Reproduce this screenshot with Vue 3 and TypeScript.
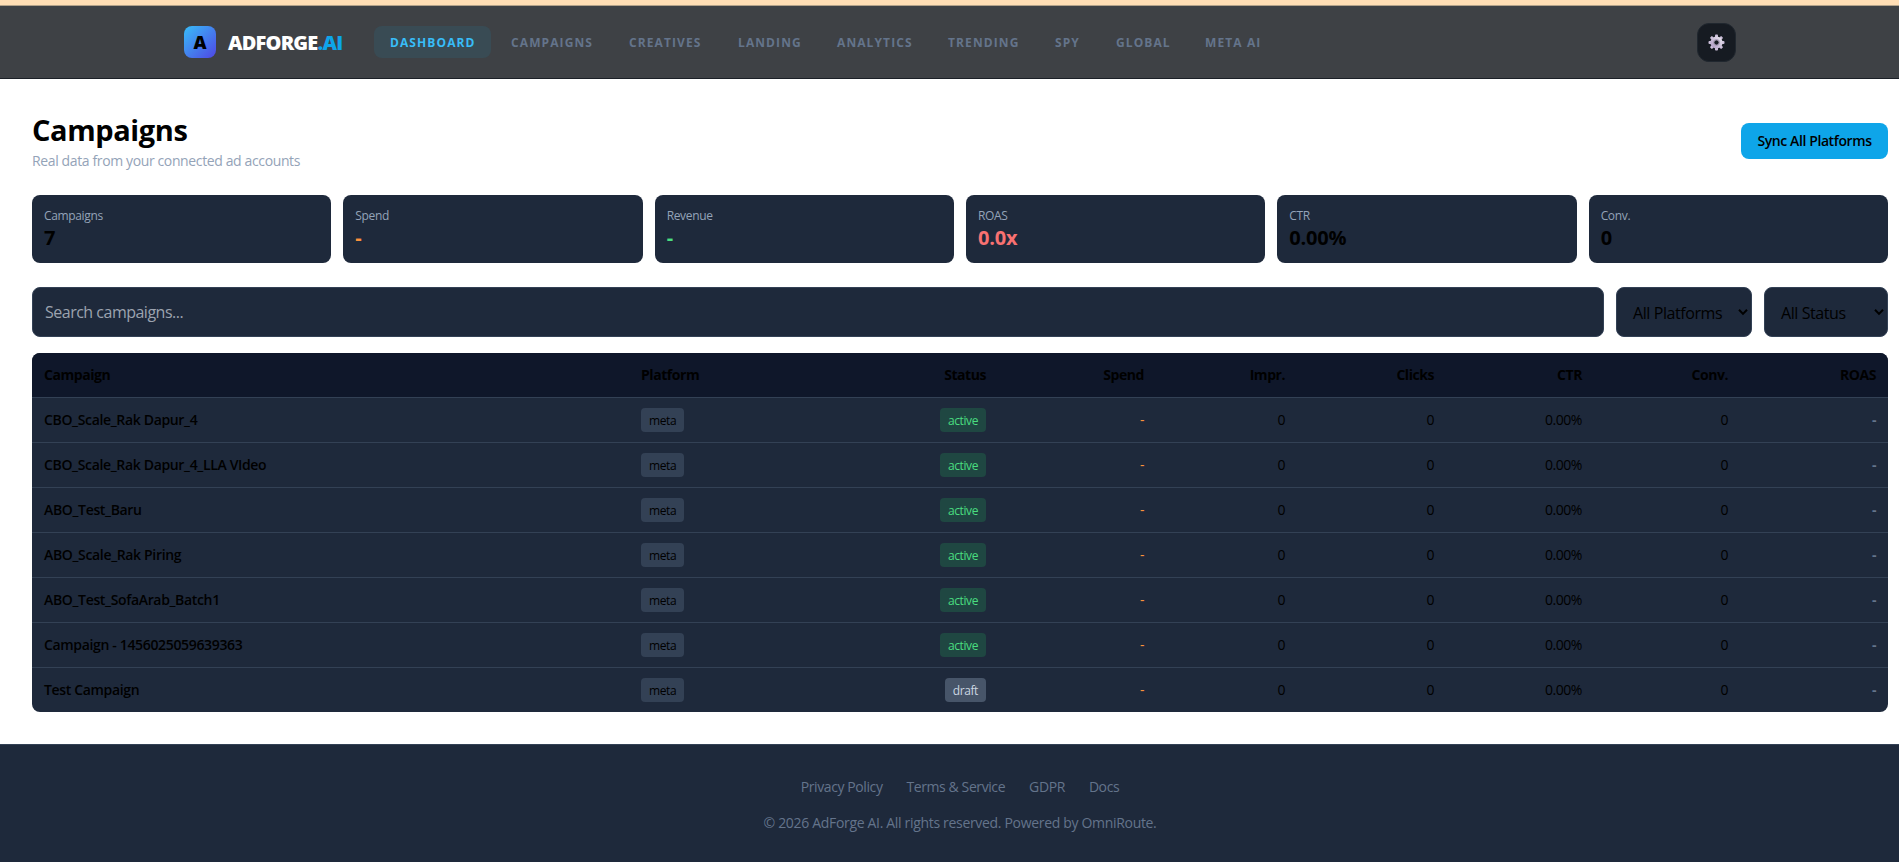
<script setup lang="ts">
interface NavItem { label: string; width: number }
interface Stat { label: string; value: string; tone?: string }
interface Campaign { name: string; status: 'active' | 'draft' }

const nav: NavItem[] = [
  { label: 'Dashboard', width: 117 },
  { label: 'Campaigns', width: 114 },
  { label: 'Creatives', width: 105 },
  { label: 'Landing', width: 95 },
  { label: 'Analytics', width: 107 },
  { label: 'Trending', width: 103 },
  { label: 'Spy', width: 57 },
  { label: 'Global', width: 85 },
  { label: 'Meta AI', width: 88 },
]

const stats: Stat[] = [
  { label: 'Campaigns', value: '7' },
  { label: 'Spend', value: '-', tone: 'orange' },
  { label: 'Revenue', value: '-', tone: 'green' },
  { label: 'ROAS', value: '0.0x', tone: 'red' },
  { label: 'CTR', value: '0.00%' },
  { label: 'Conv.', value: '0' },
]

const columns: string[] = ['Campaign', 'Platform', 'Status', 'Spend', 'Impr.', 'Clicks', 'CTR', 'Conv.', 'ROAS']

const campaigns: Campaign[] = [
  { name: 'CBO_Scale_Rak Dapur_4', status: 'active' },
  { name: 'CBO_Scale_Rak Dapur_4_LLA VIdeo', status: 'active' },
  { name: 'ABO_Test_Baru', status: 'active' },
  { name: 'ABO_Scale_Rak Piring', status: 'active' },
  { name: 'ABO_Test_SofaArab_Batch1', status: 'active' },
  { name: 'Campaign - 1456025059639363', status: 'active' },
  { name: 'Test Campaign', status: 'draft' },
]

const footerLinks: string[] = ['Privacy Policy', 'Terms & Service', 'GDPR', 'Docs']
const teeth: number[] = [0, 45, 90, 135, 180, 225, 270, 315]
</script>

<template>
  <div class="viewport">
    <div class="page">
      <div class="strip"></div>
      <header class="topbar">
        <div class="topbar-inner">
          <div class="logo">A</div>
          <div class="brand">ADFORGE<span>.AI</span></div>
          <nav class="nav">
            <a
              v-for="(item, i) in nav"
              :key="item.label"
              class="nav-item"
              :class="{ current: i === 0 }"
              :style="{ width: item.width + 'px' }"
            >{{ item.label }}</a>
          </nav>
          <button class="settings" aria-label="Settings">
            <svg width="17" height="17" viewBox="-8.5 -8.5 17 17">
              <defs>
                <linearGradient id="gear" x1="1" y1="0" x2="0" y2="1">
                  <stop offset="0" stop-color="#e3dfea" />
                  <stop offset="1" stop-color="#b5a2c9" />
                </linearGradient>
              </defs>
              <g fill="#cbbfd9">
                <rect
                  v-for="t in teeth"
                  :key="t"
                  x="-1.5"
                  y="-8"
                  width="3"
                  height="4"
                  rx="0.9"
                  :transform="`rotate(${t})`"
                />
              </g>
              <circle r="4.2" fill="none" stroke="url(#gear)" stroke-width="3.8" />
              <circle r="3" fill="none" stroke="#9a8dab" stroke-width="0.8" />
            </svg>
          </button>
        </div>
      </header>

      <main class="main">
        <div class="heading">
          <div>
            <h1>Campaigns</h1>
            <p>Real data from your connected ad accounts</p>
          </div>
          <button class="sync">Sync All Platforms</button>
        </div>

        <section class="stats">
          <div v-for="s in stats" :key="s.label" class="stat">
            <div class="stat-label">{{ s.label }}</div>
            <div class="stat-value" :class="s.tone">{{ s.value }}</div>
          </div>
        </section>

        <section class="filters">
          <div class="search">Search campaigns...</div>
          <div class="select platforms">
            <span>All Platforms</span>
            <svg width="10" height="8" viewBox="0 0 10 8"><path d="M1 1.7 5 5.9 9 1.7" /></svg>
          </div>
          <div class="select status-filter">
            <span>All Status</span>
            <svg width="10" height="8" viewBox="0 0 10 8"><path d="M1 1.7 5 5.9 9 1.7" /></svg>
          </div>
        </section>

        <section class="table">
          <div class="row head">
            <div v-for="c in columns" :key="c" class="cell">{{ c }}</div>
          </div>
          <div v-for="c in campaigns" :key="c.name" class="row">
            <div class="cell name">{{ c.name }}</div>
            <div class="cell"><span class="badge meta">meta</span></div>
            <div class="cell"><span class="badge" :class="c.status">{{ c.status }}</span></div>
            <div class="cell orange">-</div>
            <div class="cell">0</div>
            <div class="cell">0</div>
            <div class="cell">0.00%</div>
            <div class="cell">0</div>
            <div class="cell roas">-</div>
          </div>
        </section>
      </main>

      <footer class="footer">
        <div class="links">
          <a v-for="l in footerLinks" :key="l">{{ l }}</a>
        </div>
        <div class="copyright">© 2026 AdForge AI. All rights reserved. Powered by OmniRoute.</div>
      </footer>
    </div>
  </div>
</template>

<style>
body {
  margin: 0;
  background: #fff;
}
</style>

<style scoped>
* {
  box-sizing: border-box;
}
.viewport {
  width: 100%;
  height: 862px;
  overflow: hidden;
}
.page {
  width: 1920px;
  font-family: 'Open Sans', 'Noto Sans', sans-serif;
  font-size: 14px;
  line-height: 20px;
  color: #000;
}
button {
  font: inherit;
  color: inherit;
  padding: 0;
  border: 0;
}
.strip {
  height: 6px;
  background: #ffdeb5;
  border-bottom: 1px solid #b3a28a;
}
.topbar {
  height: 73px;
  background: #3e4145;
  border-bottom: 1px solid #1b2027;
}
.topbar-inner {
  width: 1552px;
  height: 72px;
  margin: 0 auto;
  display: flex;
  align-items: center;
}
.logo {
  width: 32px;
  height: 32px;
  border-radius: 8px;
  background: linear-gradient(135deg, #38bdf8, #4f46e5);
  font-size: 18px;
  font-weight: 800;
  line-height: 32px;
  text-align: center;
}
.brand {
  width: 146px;
  margin-left: 12px;
  padding-top: 1px;
  font-size: 20px;
  font-weight: 800;
  letter-spacing: -0.82px;
  color: #fff;
}
.brand span {
  color: #0ea5e9;
}
.nav {
  display: flex;
  gap: 4px;
}
.nav-item {
  height: 32px;
  padding-left: 16px;
  border-radius: 8px;
  font-size: 12px;
  font-weight: 700;
  line-height: 33px;
  letter-spacing: 1.1px;
  text-transform: uppercase;
  white-space: nowrap;
  color: #64748b;
}
.nav-item.current {
  background: #394b54;
  color: #38bdf8;
}
.settings {
  width: 39px;
  height: 39px;
  margin: 0 0.4px 0 auto;
  border: 1px solid #20272f;
  border-radius: 12px;
  background: #161b22;
  display: flex;
  align-items: center;
  justify-content: center;
}
.main {
  padding: 32px;
}
.heading {
  display: flex;
  justify-content: space-between;
  align-items: center;
  margin-bottom: 24px;
}
h1 {
  margin: 0;
  font-size: 29px;
  font-weight: 700;
  line-height: 38px;
  letter-spacing: -0.4px;
}
p {
  margin: 2px 0 0;
  letter-spacing: -0.375px;
  color: #94a3b8;
}
.sync {
  width: 147px;
  height: 36px;
  border-radius: 8px;
  background: #0ea5e9;
  font-weight: 600;
  letter-spacing: -0.4px;
}
.stats {
  display: grid;
  grid-template-columns: repeat(6, 1fr);
  gap: 12px;
  margin-bottom: 24px;
}
.stat {
  height: 68px;
  padding: 12px;
  border-radius: 8px;
  background: #1e293b;
}
.stat-label {
  font-size: 12px;
  line-height: 17px;
  letter-spacing: -0.35px;
  color: #94a3b8;
}
.stat-value {
  font-size: 20px;
  font-weight: 700;
  line-height: 27px;
  letter-spacing: -0.2px;
}
.orange {
  color: #fb923c;
}
.green {
  color: #4ade80;
}
.red {
  color: #f87171;
}
.filters {
  display: flex;
  gap: 12px;
  margin-bottom: 16px;
  font-size: 16px;
}
.search,
.select {
  height: 50px;
  border: 1px solid #334155;
  border-radius: 8px;
  background: #1e293b;
  line-height: 48px;
}
.search {
  flex: 1;
  padding-left: 12px;
  letter-spacing: -0.5px;
  color: #9ca3af;
}
.select {
  display: flex;
  align-items: center;
  justify-content: space-between;
  padding: 0 3px 0 16px;
  letter-spacing: -0.42px;
}
.select span {
  padding-top: 2px;
}
.select svg {
  margin-bottom: 1px;
  fill: none;
  stroke: #000;
  stroke-width: 2;
}
.platforms {
  width: 136px;
}
.status-filter {
  width: 124px;
}
.table {
  border-radius: 8px;
  overflow: hidden;
  background: #1e293b;
}
.row {
  display: grid;
  grid-template-columns: 597px 200px 169px 158px 141px 149px 148px 146px 148px;
  align-items: center;
  height: 45px;
  border-bottom: 1px solid #334155;
}
.row:last-child {
  border-bottom-color: #1e293b;
  margin-bottom: -1px;
}
.head {
  background: #0f172a;
  font-weight: 700;
}
.cell {
  display: flex;
  justify-content: flex-end;
  padding: 0 12px;
  letter-spacing: -0.45px;
}
.cell:nth-child(-n + 2) {
  justify-content: flex-start;
}
.cell.name {
  font-weight: 600;
  letter-spacing: -0.34px;
}
.roas {
  font-weight: 700;
  color: #64748b;
}
.badge {
  height: 24px;
  padding: 0 8px;
  border-radius: 4px;
  font-size: 12px;
  line-height: 25px;
  letter-spacing: -0.4px;
}
.meta {
  background: #334155;
}
.active {
  background: #1f4742;
  color: #4ade80;
}
.draft {
  background: #475569;
  color: #cbd5e1;
}
.footer {
  padding: 32px 0;
  border-top: 1px solid #334155;
  background: #1e293b;
  color: #64748b;
}
.links {
  display: flex;
  justify-content: center;
  gap: 24px;
  margin-bottom: 16px;
  letter-spacing: -0.41px;
}
.copyright {
  text-align: center;
  letter-spacing: -0.32px;
}
</style>
